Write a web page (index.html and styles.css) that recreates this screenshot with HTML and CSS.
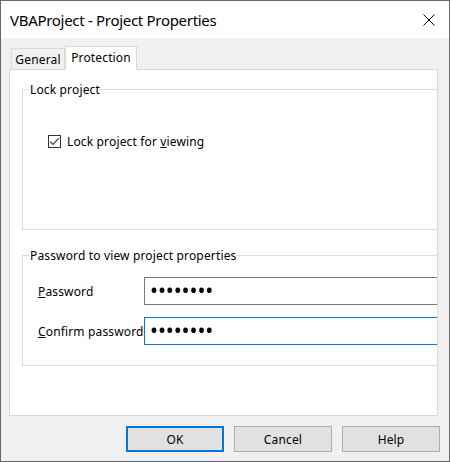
FILE: index.html
```html
<!DOCTYPE html>
<html lang="en">
<head>
<meta charset="utf-8">
<title>VBAProject - Project Properties</title>
<link rel="stylesheet" href="styles.css">
</head>
<body>
<div class="window">
  <div class="titlebar">
    <span class="title">VBAProject - Project Properties</span>
    <svg class="close" width="12" height="12" viewBox="0 0 12 12"><path d="M0.5 0.5L11.5 11.5M11.5 0.5L0.5 11.5" stroke="#000" stroke-width="1" fill="none"/></svg>
  </div>
  <div class="content">
    <div class="tabs">
      <div class="tab">General</div>
      <div class="tab active">Protection</div>
    </div>
    <div class="panel">
      <fieldset class="group group-lock">
        <legend>Lock project</legend>
        <label class="check">
          <svg class="box" width="13" height="13" viewBox="0 0 13 13"><rect x="0.5" y="0.5" width="12" height="12" fill="#fff" stroke="#333"/><polyline points="2.2,6.6 5,9.4 10.8,3.2" fill="none" stroke="#333" stroke-width="1.1"/></svg>
          <span>Lock project for <u>v</u>iewing</span>
        </label>
      </fieldset>
      <fieldset class="group group-pw">
        <legend>Password to view project properties</legend>
        <div class="row"><span class="lbl"><u>P</u>assword</span><div class="field">••••••••</div></div>
        <div class="row"><span class="lbl"><u>C</u>onfirm password</span><div class="field focus">••••••••</div></div>
      </fieldset>
    </div>
    <div class="buttons">
      <button class="btn default">OK</button>
      <button class="btn">Cancel</button>
      <button class="btn">Help</button>
    </div>
  </div>
</div>
</body>
</html>
```
FILE: styles.css
```css
* { box-sizing: border-box; }
html, body { margin: 0; padding: 0; }
body {
  width: 450px;
  height: 462px;
  font-family: "Noto Sans", "DejaVu Sans", sans-serif;
  font-size: 12px;
  line-height: 15px;
  letter-spacing: 0.15px;
  color: #000;
  background: #f0f0f0;
}
.window {
  width: 450px;
  height: 462px;
  border: 1px solid #686868;
  background: #f0f0f0;
  display: flex;
  flex-direction: column;
  overflow: hidden;
}
.titlebar {
  flex: none;
  height: 37px;
  background: #fff;
  display: flex;
  align-items: center;
  padding: 0 14px 0 9px;
}
.title { font-size: 15px; line-height: 20px; letter-spacing: -0.3px; }
.close { margin-left: auto; display: block; }

.content {
  flex: 1;
  display: flex;
  flex-direction: column;
  padding: 8px 11px 9px 8px;
}
.tabs {
  display: flex;
  align-items: flex-end;
  height: 23px;
  padding-left: 2px;
}
.tab {
  width: 54px;
  height: 21px;
  border: 1px solid #d9d9d9;
  border-bottom: none;
  background: #f0f0f0;
  text-align: center;
  padding-top: 3px;
}
.tab.active {
  position: relative;
  z-index: 1;
  width: 72px;
  height: 24px;
  margin-bottom: -1px;
  background: #fff;
  padding-top: 3px;
}
.panel {
  height: 347px;
  border: 1px solid #d9d9d9;
  background: #fff;
  overflow: hidden;
  padding: 12px 0 0 12px;
}
.group {
  margin: 0 -30px 0 0;
  padding: 0;
  min-width: 0;
  border: 1px solid #dcdcdc;
}
.group legend {
  margin-left: 6px;
  padding: 0 1px;
  line-height: 15px;
}
.group-lock { height: 148px; }
.group-pw { height: 118px; margin-top: 18px; }

.check {
  display: flex;
  align-items: center;
  height: 15px;
  margin: 37px 0 0 25px;
}
.box { display: block; margin-right: 6px; }

.row {
  display: flex;
  align-items: center;
  margin-left: 15px;
}
.row:first-of-type { margin-top: 14px; }
.row + .row { margin-top: 12px; }
.lbl { width: 106px; flex: none; white-space: nowrap; }
.field {
  flex: 1;
  height: 28px;
  border: 1px solid #7a7a7a;
  background: #fff;
  padding: 0 0 3px 5px;
  font-size: 21px;
  line-height: 24px;
  letter-spacing: 0;
  display: flex;
  align-items: center;
}
.field.focus { border-color: #0078d7; }

.buttons {
  display: flex;
  justify-content: flex-end;
  gap: 10px;
  margin: 10px -2px 0 0;
}
.btn {
  width: 98px;
  height: 26px;
  font: inherit;
  letter-spacing: inherit;
  color: #000;
  background: #e1e1e1;
  border: 1px solid #adadad;
  padding: 0;
}
.btn.default { border: 2px solid #0078d7; }
```
